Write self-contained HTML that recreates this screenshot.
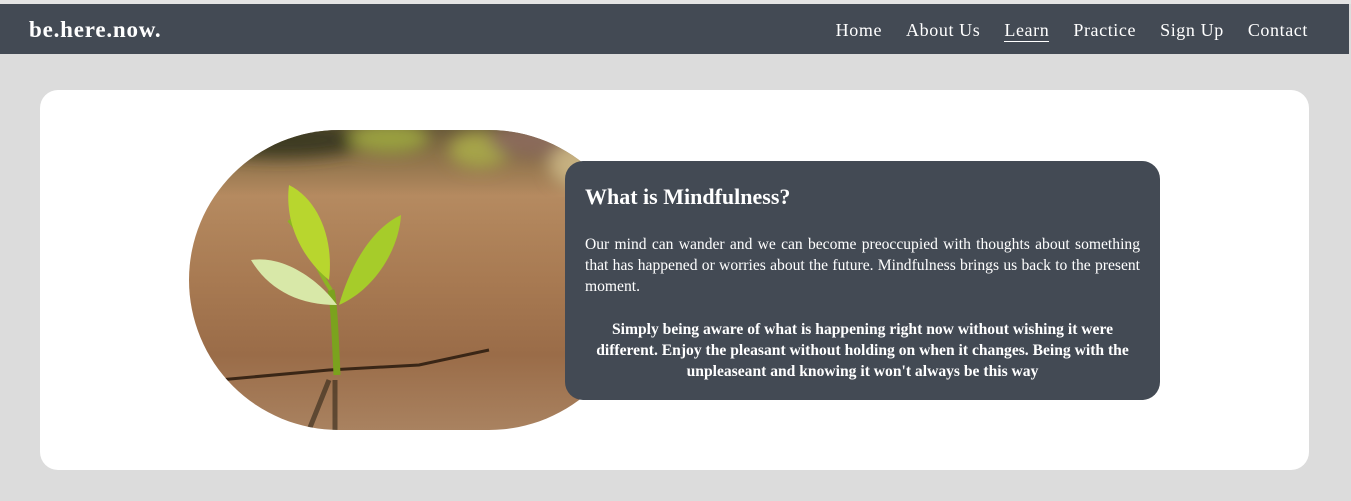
<!DOCTYPE html>
<html><head><meta charset="utf-8"><style>
*{margin:0;padding:0;box-sizing:border-box}
html,body{width:1351px;height:501px;overflow:hidden;background:#dcdcdc;font-family:"Liberation Serif",serif}
.top{position:absolute;left:0;top:0;width:1351px;height:4px;background:#e4e4e4}
nav{position:absolute;left:0;top:4px;width:1349px;height:50px;background:#434a54;color:#fff}
.logo{position:absolute;left:29px;top:13px;font-size:23px;font-weight:bold;letter-spacing:0.8px;font-family:"Liberation Serif",serif}
.links{position:absolute;right:41px;top:16px;font-size:18px;letter-spacing:.6px;white-space:nowrap}
.links span{margin-left:24px}
.links .act{border-bottom:1.5px solid #fff;padding-bottom:1px}
.card{position:absolute;left:40px;top:90px;width:1269px;height:380px;background:#fff;border-radius:18px}
.img{position:absolute;left:189px;top:130px;width:450px;height:300px;border-radius:150px;overflow:hidden;
background:linear-gradient(180deg,#6a5a3a 0%,#8a7048 8%,#b58a60 22%,#a87a52 50%,#9a6c48 75%,#a98260 100%)}
.info{position:absolute;left:565px;top:161px;width:595px;height:239px;background:#434a54;border-radius:18px;color:#fff;padding:0 20px}
h2{font-size:22px;margin-top:23px}
p{font-size:15.6px;line-height:21px;text-align:justify;margin-top:24px}
p.b{font-weight:bold;text-align:center;margin-top:22px;line-height:21px;padding:0 3px}
</style></head><body>
<div class="top"></div>
<nav><div class="logo">be.here.now.</div>
<div class="links"><span>Home</span><span>About Us</span><span class="act">Learn</span><span>Practice</span><span>Sign Up</span><span>Contact</span></div></nav>
<div class="card"></div>
<div class="img">
<svg width="450" height="300" viewBox="0 0 450 300">
<defs><filter id="bl"><feGaussianBlur stdDeviation="8"/></filter></defs>
<g filter="url(#bl)"><ellipse cx="90" cy="10" rx="90" ry="18" fill="#3d3a22"/><ellipse cx="200" cy="8" rx="40" ry="15" fill="#9aa040"/><ellipse cx="290" cy="20" rx="30" ry="18" fill="#a6a448"/><ellipse cx="350" cy="10" rx="50" ry="18" fill="#8a6a5a"/><ellipse cx="400" cy="35" rx="40" ry="25" fill="#c6b080"/></g>
<path d="M30 250 L140 240 L230 235 L300 220" stroke="#3a2616" stroke-width="3" fill="none"/>
<path d="M140 250 L120 300 M146 250 L146 300" stroke="#2e2418" stroke-width="5" fill="none" opacity=".6"/>
<path d="M148 245 C146 200 145 175 142 160" stroke="#7ba21e" stroke-width="7" fill="none"/>
<path d="M142 160 C128 140 118 110 100 90" stroke="#8cb423" stroke-width="4" fill="none"/>
<path d="M100 55 C130 70 145 110 140 150 C115 130 95 95 100 55Z" fill="#b8d62e"/>
<path d="M150 175 C160 140 180 100 212 85 C210 120 185 160 150 175Z" fill="#a6cc2a"/>
<path d="M62 130 C95 125 130 150 148 175 C110 175 80 160 62 130Z" fill="#d8e8a8"/>
</svg></div>
<div class="info">
<h2>What is Mindfulness?</h2>
<p>Our mind can wander and we can become preoccupied with thoughts about something that has happened or worries about the future. Mindfulness brings us back to the present moment.</p>
<p class="b">Simply being aware of what is happening right now without wishing it were different. Enjoy the pleasant without holding on when it changes. Being with the unpleaseant and knowing it won't always be this way</p>
</div>
</body></html>
